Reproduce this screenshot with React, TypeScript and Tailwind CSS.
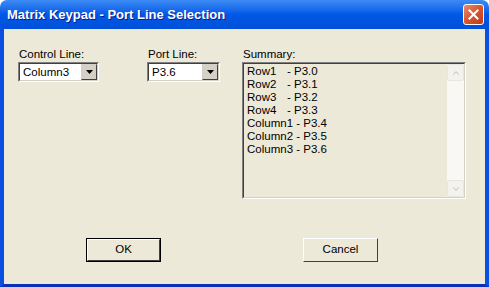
import { ChevronDown, ChevronUp } from "lucide-react";

const font = { fontFamily: '"Liberation Sans", Arial, sans-serif' };

const summary = [
  ["Row1", "- P3.0"],
  ["Row2", "- P3.1"],
  ["Row3", "- P3.2"],
  ["Row4", "- P3.3"],
  ["Column1", "- P3.4"],
  ["Column2", "- P3.5"],
  ["Column3", "- P3.6"],
];

function Combo({ value, width }: { value: string; width: string }) {
  return (
    <div
      className={`${width} flex h-[20px] border-t border-l border-t-[#808080] border-l-[#808080] border-b border-r border-b-white border-r-white`}
    >
      <div className="flex flex-1 border-t border-l border-t-[#404040] border-l-[#404040] border-b border-r border-b-[#d4d0c8] border-r-[#d4d0c8] bg-white">
        <span className="flex-1 pl-[3px] text-[11.5px] leading-[16px] text-black">{value}</span>
        <div className="flex w-[16px] items-center justify-center border-t border-l border-t-[#d4d0c8] border-l-[#d4d0c8] border-b border-r border-b-[#404040] border-r-[#404040] bg-[#d4d0c8]">
          <svg width="7" height="4" viewBox="0 0 7 4">
            <path d="M0 0h7L3.5 4z" fill="#000" />
          </svg>
        </div>
      </div>
    </div>
  );
}

function Button({ label, primary }: { label: string; primary?: boolean }) {
  return (
    <div className={`h-[24px] w-[75px] ${primary ? "border border-black" : ""}`}>
      <div className="flex h-full w-full items-center justify-center border border-t-white border-l-white border-b-[#404040] border-r-[#404040] bg-[#ece9d8] text-[11.5px] text-black">
        {label}
      </div>
    </div>
  );
}

export default function App() {
  return (
    <div className="flex h-[287px] w-[489px] flex-col overflow-hidden rounded-t-[7px] bg-white" style={font}>
      <div className="flex h-[29px] shrink-0 items-center justify-between bg-gradient-to-b from-[#3d8bf5] via-[#0058e6] to-[#0050d8] pl-[7px] pr-[5px]">
        <span className="text-[13px] font-bold text-white [text-shadow:1px_1px_#0a1e8c]">
          Matrix Keypad - Port Line Selection
        </span>
        <div className="flex h-[21px] w-[21px] items-center justify-center rounded-[3px] border border-white bg-gradient-to-br from-[#e88a6a] via-[#d9542c] to-[#c23a18]">
          <svg width="11" height="11" viewBox="0 0 11 11">
            <path d="M1.5 1.5l8 8M9.5 1.5l-8 8" stroke="#fff" strokeWidth="2" strokeLinecap="square" />
          </svg>
        </div>
      </div>

      <div className="flex flex-1 flex-col border-x-[4px] border-b-[3px] border-x-[#0b4fe0] border-b-[#0a2fb8] bg-[#ece9d8] pt-[18px]">
        <div className="flex pl-[14px]">
          <div className="w-[81px]">
            <div className="h-[14px] pl-[1px] text-[11.5px] leading-[14px] text-black">Control Line:</div>
            <div className="mt-[1px]">
              <Combo value="Column3" width="w-[81px]" />
            </div>
          </div>
          <div className="ml-[48px] w-[73px]">
            <div className="h-[14px] pl-[1px] text-[11.5px] leading-[14px] text-black">Port Line:</div>
            <div className="mt-[1px]">
              <Combo value="P3.6" width="w-[73px]" />
            </div>
          </div>
          <div className="ml-[22px] w-[224px]">
            <div className="h-[14px] pl-[1px] text-[11.5px] leading-[14px] text-black">Summary:</div>
            <div className="mt-[1px] flex h-[137px] border-t border-l border-t-[#808080] border-l-[#808080] border-b border-r border-b-white border-r-white">
              <div className="flex flex-1 border-t border-l border-t-[#404040] border-l-[#404040] border-b border-r border-b-[#d4d0c8] border-r-[#d4d0c8] bg-[#ece9d8]">
                <div className="flex-1 pl-[3px] pt-[1px] text-[11.5px] leading-[13px] text-black">
                  {summary.map(([name, port]) => (
                    <div key={name} className="flex whitespace-pre">
                      <span className={name.startsWith("Row") ? "w-[40px]" : ""}>
                        {name.startsWith("Row") ? name : name + " "}
                      </span>
                      <span>{port}</span>
                    </div>
                  ))}
                </div>
                <div className="flex w-[17px] flex-col justify-between bg-[#f9f8f4]">
                  <div className="flex h-[17px] items-center justify-center rounded-[2px] border border-[#e8e6de] bg-[#f3f2ec]">
                    <ChevronUp size={10} strokeWidth={2.5} color="#c8c6bc" />
                  </div>
                  <div className="flex h-[17px] items-center justify-center rounded-[2px] border border-[#e8e6de] bg-[#f3f2ec]">
                    <ChevronDown size={10} strokeWidth={2.5} color="#c8c6bc" />
                  </div>
                </div>
              </div>
            </div>
          </div>
        </div>

        <div className="mt-[39px] flex gap-[142px] pl-[82px]">
          <Button label="OK" primary />
          <Button label="Cancel" />
        </div>
      </div>
    </div>
  );
}
